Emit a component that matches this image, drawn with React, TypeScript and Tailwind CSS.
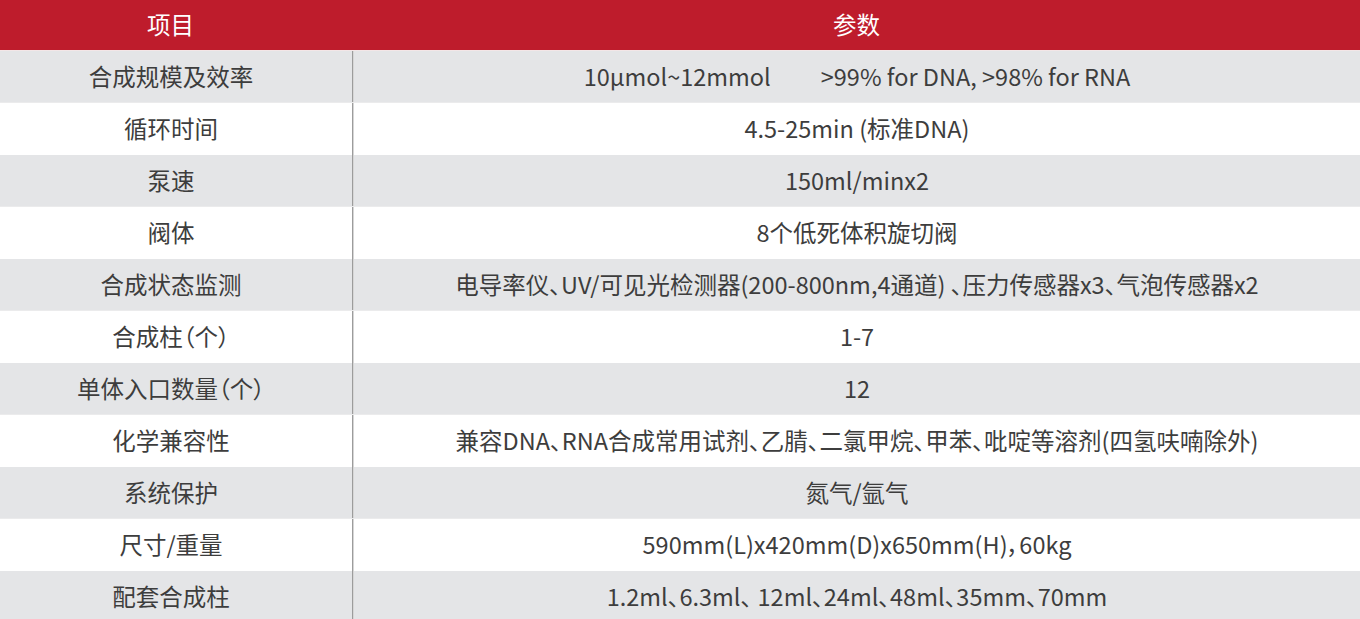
import React from "react";

const rows: [string, React.ReactNode][] = [
  ["合成规模及效率", <>10μmol~12mmol<span className="inline-block w-[50px]" />&gt;99% for DNA, &gt;98% for RNA</>],
  ["循环时间", "4.5-25min (标准DNA)"],
  ["泵速", "150ml/minx2"],
  ["阀体", "8个低死体积旋切阀"],
  ["合成状态监测", "电导率仪、UV/可见光检测器(200-800nm,4通道) 、压力传感器x3、气泡传感器x2"],
  ["合成柱（个）", "1-7"],
  ["单体入口数量（个）", "12"],
  ["化学兼容性", "兼容DNA、RNA合成常用试剂、乙腈、二氯甲烷、甲苯、吡啶等溶剂(四氢呋喃除外)"],
  ["系统保护", "氮气/氩气"],
  ["尺寸/重量", "590mm(L)x420mm(D)x650mm(H)，60kg"],
  ["配套合成柱", "1.2ml、6.3ml、 12ml、24ml、48ml、35mm、70mm"],
];

export default function App() {
  return (
    <div className="w-[1360px] h-[619px] overflow-hidden bg-white text-[#3d3d3d] text-[23.5px] [font-family:'Noto_Sans_CJK_SC','Noto_Sans',sans-serif] [font-feature-settings:'palt']">
      <div className="flex h-[51px] bg-[#be1c2c] text-white items-center border-b border-[#f3e6e7]">
        <div className="w-[353px] pr-[12px] text-center">项目</div>
        <div className="flex-1 text-center">参数</div>
      </div>
      {rows.map(([k, v], i) => (
        <div
          key={i}
          className={`flex h-[52px] ${i % 2 === 0 ? "bg-[#e4e5e7] border-b border-[#ebebec]" : "bg-white"}`}
        >
          <div className="w-[352px] pr-[10px] flex items-center justify-center">{k}</div>
          <div className="w-[1px] bg-[#9c9c9c]" />
          <div className="w-[1px] bg-[#d6d6d6]" />
          <div className="flex-1 flex items-center justify-center whitespace-nowrap">{v}</div>
        </div>
      ))}
    </div>
  );
}
